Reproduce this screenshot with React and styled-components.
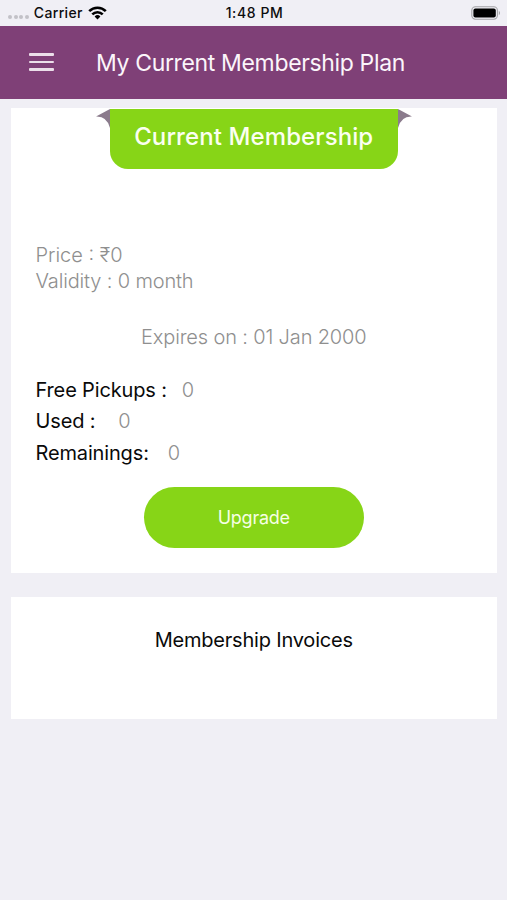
import styled, { createGlobalStyle } from "styled-components";

const GlobalStyle = createGlobalStyle`
  body {
    margin: 0;
    background-color: #f0eff5;
    font-family: Inter, "Liberation Sans", sans-serif;
  }
`;

const Screen = styled.div`
  display: flex;
  flex-direction: column;
  min-height: 900px;
  background-color: #f0eff5;
`;

const StatusBar = styled.div`
  display: grid;
  grid-template-columns: 1fr auto 1fr;
  align-items: center;
  height: 25.5px;
  padding: 0 6px 0 8px;
  color: #0c0c0e;
  font-size: 14px;
  font-weight: 500;
`;

const CarrierInfo = styled.div`
  display: flex;
  align-items: center;
`;

const SignalDots = styled.div`
  display: flex;
  gap: 1.6px;
  margin: 8px 5px 0 0;
  span {
    width: 4px;
    height: 4px;
    border-radius: 50%;
    background-color: #c2c1c7;
  }
`;

const StatusText = styled.span`
  letter-spacing: ${(props) => props.$spacing || "0"};
`;

const WifiIcon = styled.svg`
  width: 19px;
  height: 15px;
  margin-left: 5px;
`;

const BatteryIcon = styled.svg`
  width: 30px;
  height: 14px;
  justify-self: end;
`;

const Header = styled.header`
  display: flex;
  align-items: center;
  height: 73px;
  padding-left: 29px;
  background-color: #7f4077;
`;

const MenuButton = styled.button`
  display: flex;
  flex-direction: column;
  gap: 5px;
  width: 25px;
  margin: 0 42px 0 0;
  padding: 0;
  border: 0;
  background: none;
  span {
    height: 2.6px;
    border-radius: 1px;
    background-color: #ecdfea;
  }
`;

const Title = styled.h1`
  margin: 1px 0 0;
  color: #fbf5fa;
  font-size: 23px;
  font-weight: 400;
  letter-spacing: -0.35px;
  line-height: 28px;
`;

const Content = styled.main`
  display: flex;
  flex-direction: column;
  gap: 24.5px;
  padding: 9.5px 10px 0 10.5px;
`;

const Card = styled.section`
  display: flex;
  flex-direction: column;
  align-items: center;
  box-sizing: border-box;
  height: ${(props) => props.$height};
  padding: ${(props) => props.$padding};
  background-color: #fff;
`;

const Ribbon = styled.div`
  display: flex;
  align-items: flex-start;
`;

const RibbonTail = styled.svg`
  width: 14px;
  height: 20px;
  transform: ${(props) => (props.$flip ? "scaleX(-1)" : "none")};
`;

const RibbonLabel = styled.h2`
  width: 288px;
  height: 60px;
  margin: 0;
  border-radius: 0 0 18px 18px;
  background-color: #87d517;
  color: #fbfff0;
  font-size: 24px;
  font-weight: 450;
  letter-spacing: 0.1px;
  line-height: 56px;
  text-align: center;
  white-space: nowrap;
`;

const Details = styled.div`
  align-self: stretch;
  margin-top: 73px;
`;

const Text = styled.p`
  margin: 0;
  color: ${(props) => (props.$dark ? "#0a0a0a" : "#8f8f8f")};
  font-size: 20px;
  font-weight: ${(props) => (props.$dark ? 400 : 300)};
  letter-spacing: ${(props) => props.$spacing || "-0.15px"};
  line-height: 26px;
`;

const Expiry = styled.div`
  margin-top: 30px;
`;

const Usage = styled.dl`
  display: flex;
  flex-direction: column;
  align-self: stretch;
  gap: 5.3px;
  margin: 27px 0 0;
  dd {
    margin-left: 0;
  }
`;

const UsageRow = styled.div`
  display: flex;
  gap: ${(props) => props.$gap};
`;

const UpgradeButton = styled.button`
  width: 220px;
  height: 61px;
  margin: 21px 0 0;
  padding: 0;
  border: 0;
  border-radius: 31px;
  background-color: #87d517;
  color: #f6ffe4;
  font-family: inherit;
  font-size: 18px;
  font-weight: 400;
  letter-spacing: -0.25px;
`;

const usage = [
  { label: "Free Pickups :", value: 0, gap: "15px" },
  { label: "Used :", value: 0, gap: "23px" },
  { label: "Remainings:", value: 0, gap: "19px" },
];

const App = () => {
  return (
    <>
      <GlobalStyle />
      <Screen>
        <StatusBar>
          <CarrierInfo>
            <SignalDots>
              <span />
              <span />
              <span />
              <span />
            </SignalDots>
            <StatusText $spacing="0.35px">Carrier</StatusText>
            <WifiIcon viewBox="0 0 19 15">
              <g fill="none" stroke="#000" strokeWidth="2.6">
                <path d="M1.2 6.1a11.8 11.8 0 0 1 16.6 0" />
                <path d="M4.3 9.4a7.4 7.4 0 0 1 10.4 0" />
              </g>
              <path d="M9.5 14.4 6.6 11.5a4.1 4.1 0 0 1 5.8 0Z" />
            </WifiIcon>
          </CarrierInfo>
          <StatusText $spacing="0.6px">1:48 PM</StatusText>
          <BatteryIcon viewBox="0 0 30 14">
            <rect
              x="0.8"
              y="0.8"
              width="25.6"
              height="12.4"
              rx="3.6"
              fill="none"
              stroke="#a3a3a6"
              strokeWidth="1.1"
            />
            <rect x="2.4" y="2.4" width="22.4" height="9.2" rx="2" />
            <path d="M27.8 4.8a2.6 2.6 0 0 1 0 4.4Z" fill="#a3a3a6" />
          </BatteryIcon>
        </StatusBar>
        <Header>
          <MenuButton aria-label="Menu">
            <span />
            <span />
            <span />
          </MenuButton>
          <Title>My Current Membership Plan</Title>
        </Header>
        <Content>
          <Card $height="464.5px" $padding="1px 25px 0">
            <Ribbon>
              <RibbonTail viewBox="0 0 14 20">
                <path d="M14 0 0 7.5Q11 7 14 19Z" fill="#8b7b8c" />
              </RibbonTail>
              <RibbonLabel>Current Membership</RibbonLabel>
              <RibbonTail viewBox="0 0 14 20" $flip>
                <path d="M14 0 0 7.5Q11 7 14 19Z" fill="#8b7b8c" />
              </RibbonTail>
            </Ribbon>
            <Details>
              <Text $spacing="0">Price : ₹0</Text>
              <Text>Validity : 0 month</Text>
            </Details>
            <Expiry>
              <Text>Expires on : 01 Jan 2000</Text>
            </Expiry>
            <Usage>
              {usage.map((item) => (
                <UsageRow key={item.label} $gap={item.gap}>
                  <Text as="dt" $dark>
                    {item.label}
                  </Text>
                  <Text as="dd">{item.value}</Text>
                </UsageRow>
              ))}
            </Usage>
            <UpgradeButton>Upgrade</UpgradeButton>
          </Card>
          <Card $height="122px" $padding="30px 25px 0">
            <Text as="h2" $dark $spacing="-0.2px">
              Membership Invoices
            </Text>
          </Card>
        </Content>
      </Screen>
    </>
  );
};

export default App;
